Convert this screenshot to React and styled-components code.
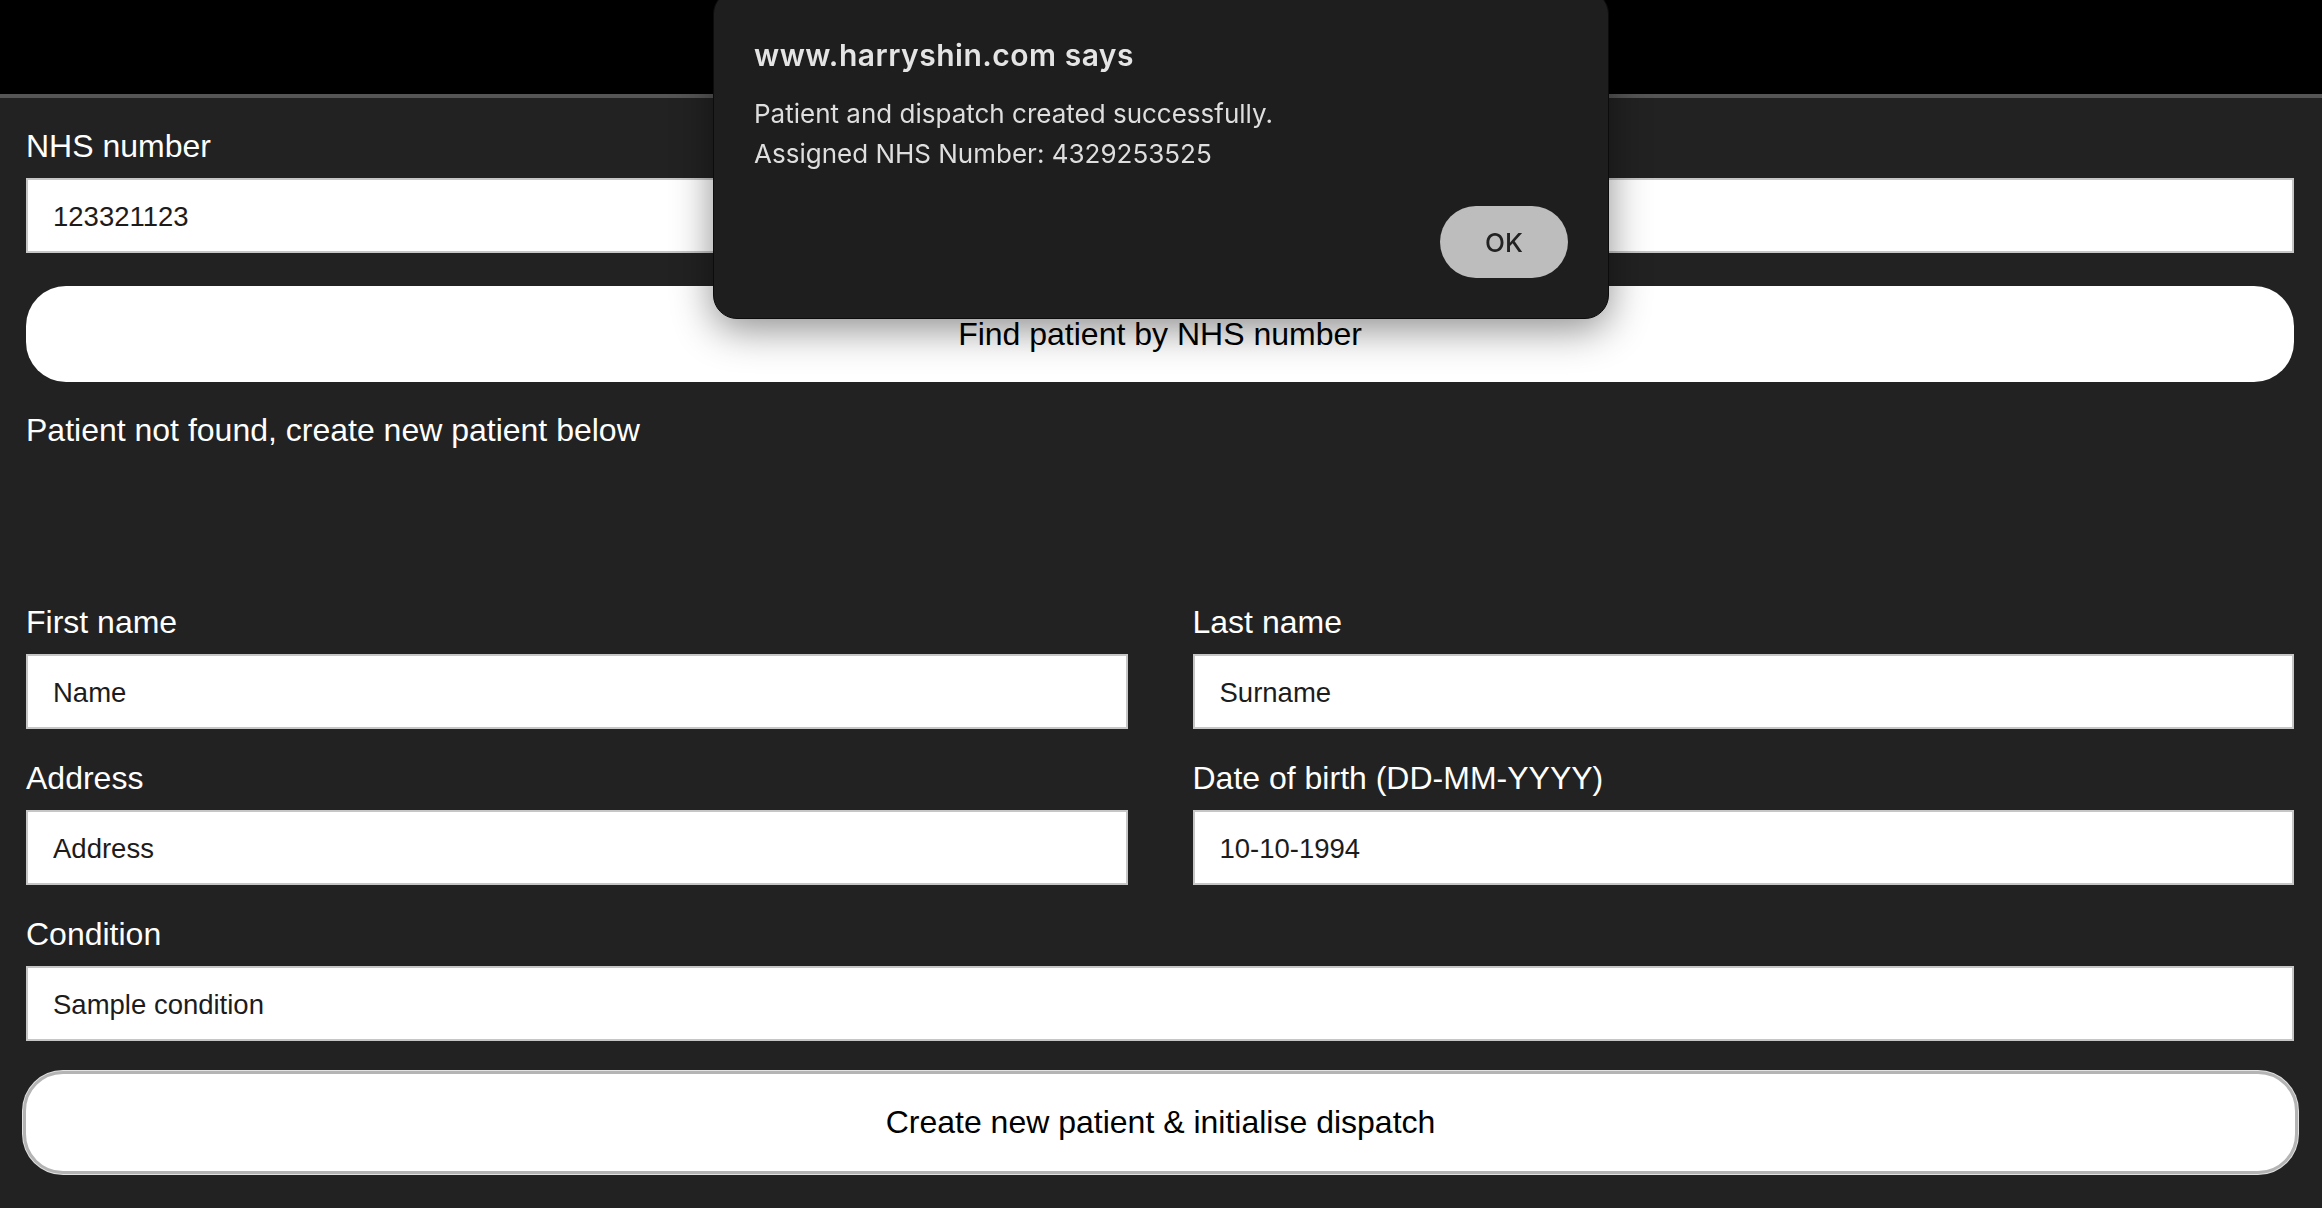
import React from "react";
import styled, { createGlobalStyle } from "styled-components";

const GlobalStyle = createGlobalStyle`
  html, body {
    margin: 0;
    padding: 0;
    background: #222222;
  }
  body {
    font-family: "Liberation Sans", Arial, sans-serif;
  }
`;

const Page = styled.div`
  min-height: 1208px;
  background: #222222;
  display: flex;
  flex-direction: column;
`;

const TopBar = styled.header`
  height: 94px;
  background: #000;
  border-bottom: 4px solid #555555;
`;

const Main = styled.main`
  display: flex;
  flex-direction: column;
  padding: 30px 28px 0 26px;
`;

const Field = styled.div`
  display: flex;
  flex-direction: column;
`;

const Label = styled.label`
  font-size: 32px;
  line-height: 37px;
  color: #ffffff;
  margin-bottom: 13px;
`;

const Input = styled.input`
  box-sizing: border-box;
  height: 75px;
  width: 100%;
  padding: 2px 24px 0 25px;
  border: 2px solid #c6c6c6;
  border-radius: 0;
  background: #ffffff;
  font-family: "Liberation Sans", Arial, sans-serif;
  font-size: 27.5px;
  color: #1c1c1c;
  outline: none;
`;

const PillButton = styled.button`
  box-sizing: border-box;
  height: ${(p) => (p.$focused ? "103px" : "96px")};
  margin: ${(p) => (p.$focused ? "30px -4px 0 -3px" : "33px 0 0")};
  border: ${(p) => (p.$focused ? "3px solid #b4b4b4" : "none")};
  box-shadow: ${(p) => (p.$focused ? "0 0 0 1px #e2e2e2" : "none")};
  border-radius: 40px;
  background: #ffffff;
  font-family: "Liberation Sans", Arial, sans-serif;
  font-size: 32px;
  color: #000;
  cursor: pointer;
`;

const Status = styled.p`
  margin: 30px 0 155px;
  font-size: 32px;
  line-height: 37px;
  color: #ffffff;
`;

const Grid = styled.div`
  display: grid;
  grid-template-columns: 1fr 1fr;
  column-gap: 65px;
  row-gap: 31px;
  margin-bottom: 31px;
`;

const Dialog = styled.div`
  position: fixed;
  top: -10px;
  left: 50%;
  transform: translateX(-50%);
  box-sizing: border-box;
  width: 896px;
  padding: 47px 40px 40px;
  background: #1e1e1e;
  border: 1px solid #0c0c0c;
  border-radius: 24px;
  box-shadow: 0 10px 40px rgba(0, 0, 0, 0.45);
  font-family: Inter, "Noto Sans", sans-serif;
  display: flex;
  flex-direction: column;
`;

const DialogTitle = styled.div`
  font-size: 30px;
  line-height: 34px;
  font-weight: 600;
  letter-spacing: 0.5px;
  color: #e4e4e4;
`;

const DialogMessage = styled.div`
  margin-top: 22px;
  font-size: 26px;
  line-height: 40px;
  color: #dedede;
`;

const DialogActions = styled.div`
  display: flex;
  justify-content: flex-end;
  margin-top: 32px;
`;

const OkButton = styled.button`
  width: 128px;
  height: 72px;
  border: none;
  border-radius: 36px;
  background: #bdbdbd;
  color: #222;
  font-family: Inter, "Noto Sans", sans-serif;
  font-size: 26px;
  font-weight: 500;
  cursor: pointer;
`;

const TextField = ({ label, value }) => (
  <Field>
    <Label>{label}</Label>
    <Input value={value} readOnly />
  </Field>
);

export default function App() {
  return (
    <Page>
      <GlobalStyle />
      <TopBar />
      <Main>
        <TextField label="NHS number" value="123321123" />
        <PillButton>Find patient by NHS number</PillButton>
        <Status>Patient not found, create new patient below</Status>
        <Grid>
          <TextField label="First name" value="Name" />
          <TextField label="Last name" value="Surname" />
          <TextField label="Address" value="Address" />
          <TextField label="Date of birth (DD-MM-YYYY)" value="10-10-1994" />
        </Grid>
        <TextField label="Condition" value="Sample condition" />
        <PillButton $focused>Create new patient &amp; initialise dispatch</PillButton>
      </Main>
      <Dialog role="alertdialog">
        <DialogTitle>www.harryshin.com says</DialogTitle>
        <DialogMessage>
          Patient and dispatch created successfully.
          <br />
          Assigned NHS Number: 4329253525
        </DialogMessage>
        <DialogActions>
          <OkButton>OK</OkButton>
        </DialogActions>
      </Dialog>
    </Page>
  );
}
